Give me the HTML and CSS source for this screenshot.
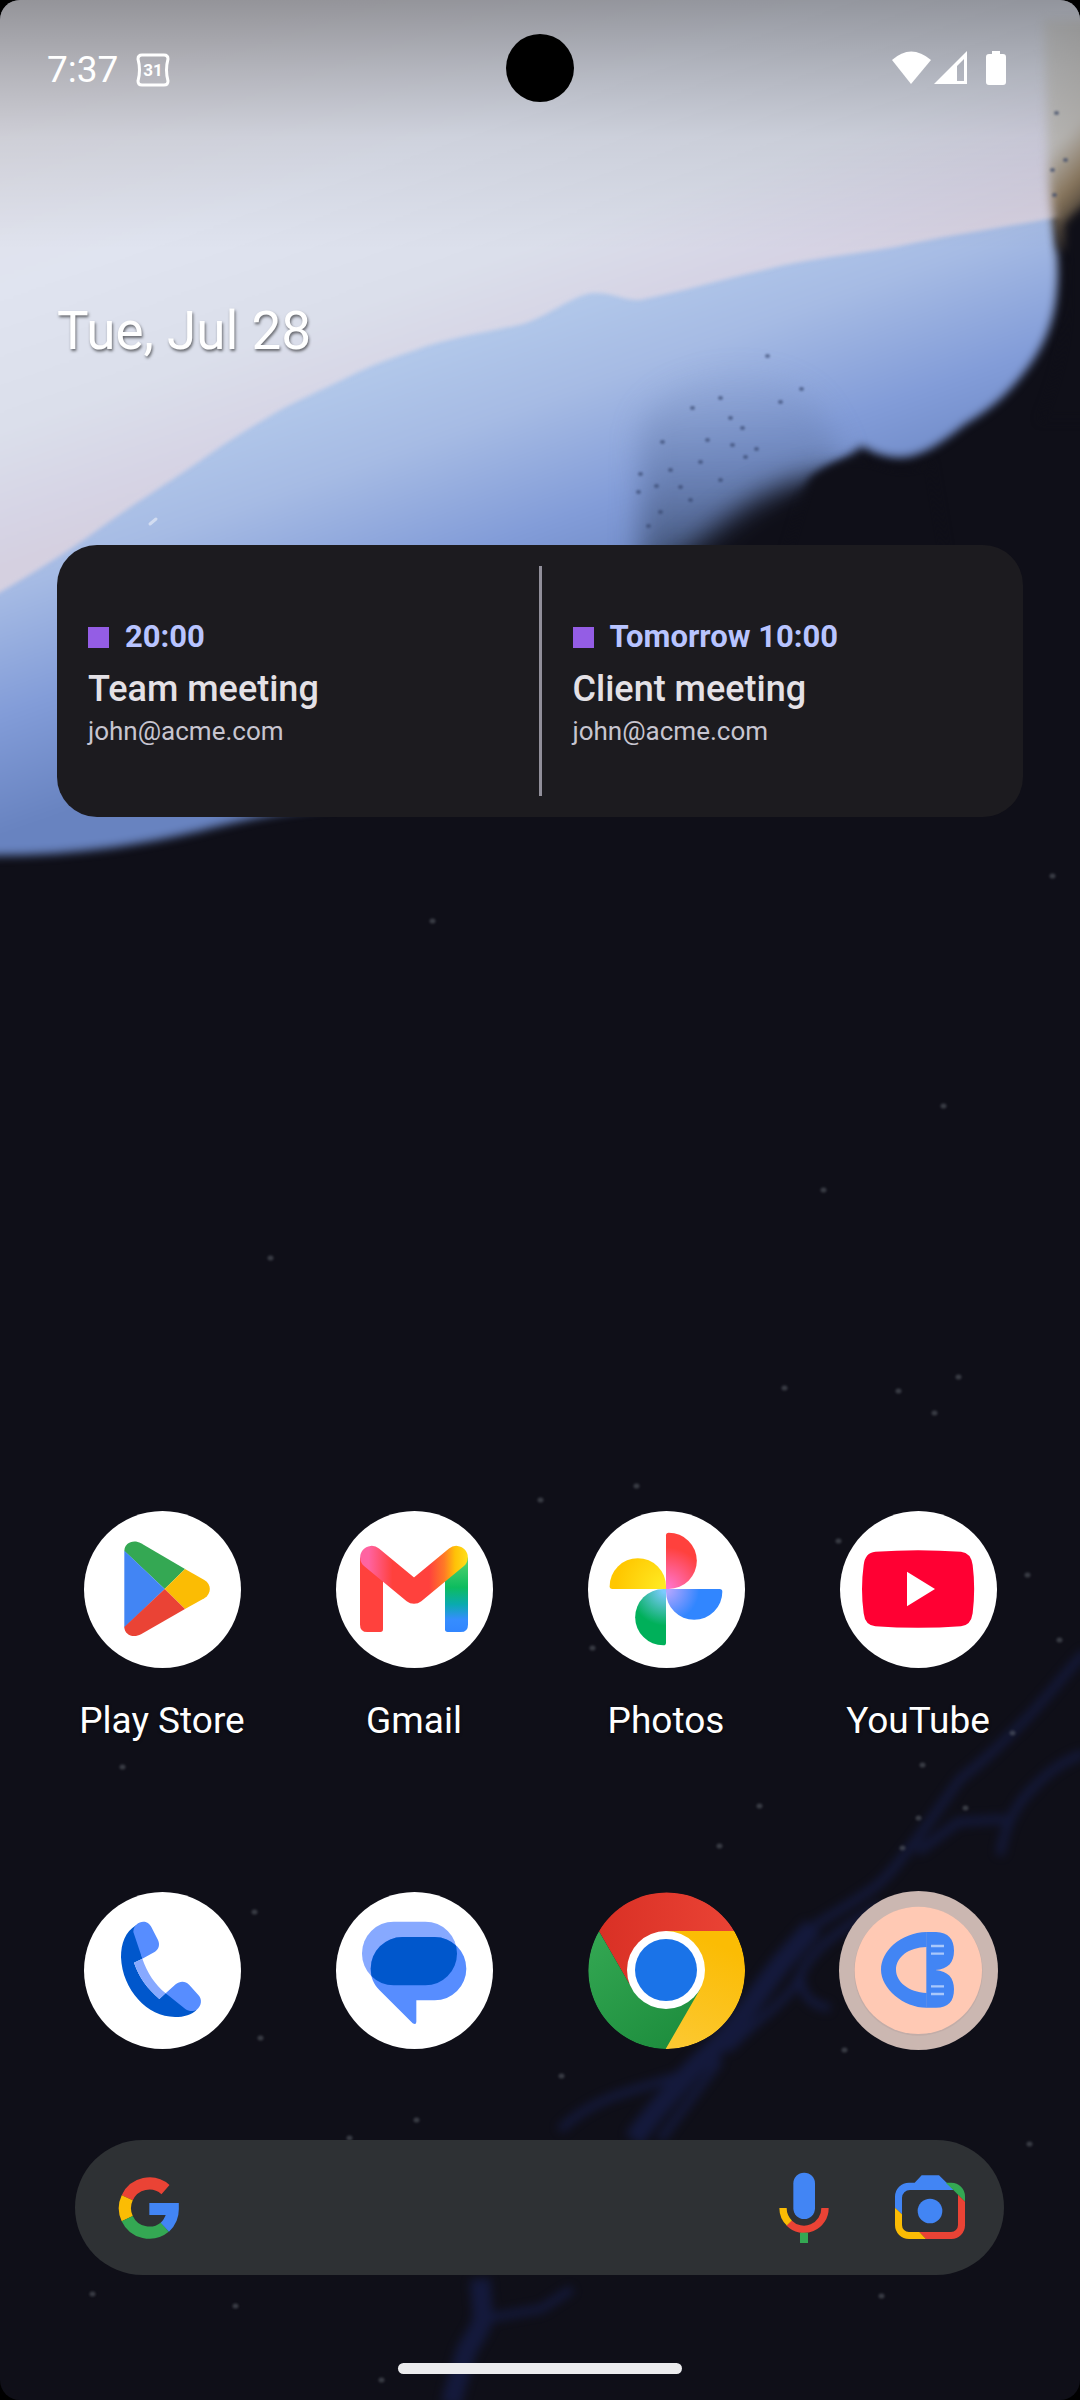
FILE: index.html
```html
<!DOCTYPE html>
<html lang="en">
<head>
    <meta charset="UTF-8">
    <meta name="viewport" content="width=device-width, initial-scale=1.0">
    <title>Home screen</title>
    <link rel="stylesheet" href="styles.css">
</head>
<body>
    <div class="screen">
        <!-- wallpaper -->
        <svg class="wallpaper" viewBox="0 0 1080 2400" preserveAspectRatio="xMidYMin slice" aria-hidden="true">
            <defs>
                <linearGradient id="blue" gradientUnits="userSpaceOnUse" x1="155" y1="442" x2="261" y2="743">
                    <stop offset="0" stop-color="#b2c8ea"/>
                    <stop offset="0.28" stop-color="#a6bbe4"/>
                    <stop offset="0.65" stop-color="#829cd8"/>
                    <stop offset="1" stop-color="#6883c0"/>
                </linearGradient>
                <linearGradient id="lilac" gradientUnits="userSpaceOnUse" x1="33" y1="94" x2="178" y2="508">
                    <stop offset="0" stop-color="#e0e0e8"/>
                    <stop offset="0.4" stop-color="#e0e4f0"/>
                    <stop offset="0.7" stop-color="#dbdfeb"/>
                    <stop offset="0.9" stop-color="#d6d4e5"/>
                    <stop offset="1" stop-color="#d5d0e0"/>
                </linearGradient>
                <linearGradient id="brown" x1="0.2" y1="0" x2="0.5" y2="1">
                    <stop offset="0" stop-color="#d6d7d9"/>
                    <stop offset="0.5" stop-color="#c2c0bd"/>
                    <stop offset="0.72" stop-color="#8d7a60"/>
                    <stop offset="1" stop-color="#17161a"/>
                </linearGradient>
                <linearGradient id="shade" x1="0" y1="0" x2="0" y2="1">
                    <stop offset="0" stop-color="#000" stop-opacity="0.34"/>
                    <stop offset="0.28" stop-color="#000" stop-opacity="0.2"/>
                    <stop offset="0.55" stop-color="#000" stop-opacity="0.08"/>
                    <stop offset="1" stop-color="#000" stop-opacity="0"/>
                </linearGradient>
                <linearGradient id="smoke" x1="0" y1="0" x2="0" y2="1">
                    <stop offset="0" stop-color="#6f86b4" stop-opacity="0.1"/>
                    <stop offset="0.5" stop-color="#566b97" stop-opacity="0.55"/>
                    <stop offset="1" stop-color="#2c3a55" stop-opacity="0.9"/>
                </linearGradient>
                <filter id="soft1" filterUnits="userSpaceOnUse" x="-60" y="-60" width="1200" height="2520"><feGaussianBlur stdDeviation="1"/></filter>
                <filter id="soft2" filterUnits="userSpaceOnUse" x="-60" y="-60" width="1200" height="2520"><feGaussianBlur stdDeviation="2"/></filter>
                <filter id="soft5" filterUnits="userSpaceOnUse" x="-60" y="-60" width="1200" height="2520"><feGaussianBlur stdDeviation="5"/></filter>
                <filter id="soft14" filterUnits="userSpaceOnUse" x="-60" y="-60" width="1200" height="1200"><feGaussianBlur stdDeviation="14"/></filter>
            </defs>
            <rect width="1080" height="2400" fill="#0f0f18"/>
            <path filter="url(#soft5)" fill="url(#blue)" d="M-40 200H1054C1055 240 1060 265 1057 290C1055 320 1044 350 1019 379C1000 402 985 412 964 425C945 440 930 451 912 456C895 460 878 456 862 446L800 490L700 600H626V700L420 800C300 806 250 818 200 831C138 845 70 858 -40 855Z"/>
            <path filter="url(#soft14)" fill="url(#smoke)" d="M640 590V430C656 370 780 350 820 410L840 450V590Z"/>
            <path filter="url(#soft14)" fill="#0f0f18" d="M640 640V584C690 556 720 520 756 500C790 480 826 470 858 482L900 500V640Z"/>
            <path filter="url(#soft5)" fill="#0f0f18" d="M810 478C835 456 860 456 885 466C900 471 915 470 930 462L960 640H760Z"/>
            <path filter="url(#soft2)" fill="url(#lilac)" d="M-20 -20H1100V215L1054 218C1000 228 950 235 895 247C850 255 810 258 764 270C720 280 680 292 640 300C625 301 612 292 592 293C570 297 550 315 523 324C485 333 450 337 413 351C385 360 365 368 344 379C320 391 297 400 275 413C250 428 230 440 207 456C170 482 135 503 103 526C65 554 30 575 -20 604Z"/>
            <path filter="url(#soft5)" fill="url(#brown)" d="M1044 20H1110V250H1058C1054 220 1050 200 1048 170Z"/>
            <path filter="url(#soft5)" fill="#0f0f18" d="M1064 224C1074 215 1080 205 1110 190V420H1040C1070 350 1070 300 1064 224Z"/>
            <path filter="url(#soft1)" class="grain" d="M640 474h1M707 440h1M732 445h1M680 487h1M745 457h1M756 449h1M801 389h1M767 356h1M660 512h1M638 492h1M670 470h1M690 500h1M720 480h1M648 526h1M692 408h1M720 398h1M742 428h1M780 402h1M662 442h1M700 462h1M656 486h1M730 418h1M1056 113h1M1052 170h1M1054 195h1M1065 160h1"/>
            <rect width="1080" height="250" fill="url(#shade)"/>
            <path class="streak" d="M150 524l6-5"/>
            <g filter="url(#soft5)" class="veins">
                <path d="M1085 1652C1055 1685 1045 1700 1023 1722C1000 1745 985 1760 960 1779L916 1840C900 1860 890 1875 876 1886C850 1905 830 1915 813 1927"/>
                <path class="thick" d="M813 1927L782 1962C760 1990 745 2015 728 2034C715 2050 700 2060 688 2074C670 2095 650 2115 634 2140"/>
                <path d="M1085 1753C1060 1762 1045 1775 1032 1789C1015 1805 1005 1825 1000 1855M1005 1819L958 1822L918 1852M880 1905C840 1930 810 1950 800 1976C790 2000 755 2020 728 2050M800 1976C802 1995 810 2005 830 2008"/>
                <path d="M690 2070C650 2090 600 2090 560 2130M720 2060L660 2140"/>
                <path class="thick" d="M480 2279L483 2319C478 2335 468 2345 465 2355C460 2375 455 2385 451 2405"/>
                <path d="M483 2319L541 2309L572 2289"/>
            </g>
            <path filter="url(#soft1)" class="stars" d="M432 921h1M270 1258h1M943 1106h1M958 1377h1M898 1391h1M934 1413h1M784 1388h1M636 1486h1M759 1806h1M719 1846h1M922 1765h1M918 1818h1M902 1848h1M965 1808h1M1012 1733h1M1059 1640h1M1027 1575h1M838 1541h1M592 1648h1M122 1767h1M260 2038h1M254 1912h1M561 2076h1M416 2120h1M349 2138h1M381 2380h1M235 2306h1M844 2050h1M1029 2144h1M881 2296h1M540 1500h1M823 1190h1M1052 876h1M92 2294h1"/>
        </svg>

        <header class="status">
            <div class="status-left">
                <time class="clock">7:37</time>
                <svg width="34" height="34" viewBox="0 0 34 34" role="img" aria-label="Calendar event">
                    <path d="M6 2H28Q32 2 32 6Q29 17 32 28Q32 32 28 32H6Q2 32 2 28Q5 17 2 6Q2 2 6 2Z" fill="none" stroke="#fff" stroke-width="3"/>
                    <text class="day" x="17" y="23" text-anchor="middle">31</text>
                </svg>
            </div>
            <div class="camera"></div>
            <div class="status-right">
                <svg width="118" height="36" viewBox="890 50 118 36" fill="#fff" role="img" aria-label="Wi-Fi, signal, battery">
                    <path d="M892 60Q911 43 931 60L911 84Z"/>
                    <path fill-rule="evenodd" d="M934 84L967 51V84ZM957 66V81H964V59Z"/>
                    <path d="M992 51H1000V54H1003Q1006 54 1006 57V82Q1006 85 1003 85H989Q986 85 986 82V57Q986 54 989 54H992Z"/>
                </svg>
            </div>
        </header>

        <main>
            <h1 class="date">Tue, Jul 28</h1>

            <section class="agenda">
                <article class="event">
                    <p class="event-time">20:00</p>
                    <h2>Team meeting</h2>
                    <p class="event-mail">john@acme.com</p>
                </article>
                <div class="divider"></div>
                <article class="event">
                    <p class="event-time">Tomorrow 10:00</p>
                    <h2>Client meeting</h2>
                    <p class="event-mail">john@acme.com</p>
                </article>
            </section>
        </main>

        <nav class="apps">
            <a class="app" href="#">
                <svg class="icon" viewBox="69 63 471 471" aria-hidden="true">
                    <path fill="#34a853" d="M190 183C190 160 216 147 240 160L372 237L311 297Z"/>
                    <path fill="#4285f4" d="M190 182L311 297L190 413Z"/>
                    <path fill="#fbbc04" d="M372 237L430 270C452 283 452 311 430 325L372 357L311 297Z"/>
                    <path fill="#ea4335" d="M190 411L311 297L372 357L240 433C216 446 190 434 190 411Z"/>
                </svg>
                <span>Play Store</span>
            </a>
            <a class="app" href="#">
                <svg class="icon" viewBox="825 63 471 471" aria-hidden="true">
                    <defs>
                        <linearGradient id="gm-top" gradientUnits="userSpaceOnUse" x1="897" y1="0" x2="1221" y2="0">
                            <stop offset="0.08" stop-color="#ff63a1"/>
                            <stop offset="0.3" stop-color="#ff413d"/>
                            <stop offset="0.64" stop-color="#ff413d"/>
                            <stop offset="0.78" stop-color="#ff7a26"/>
                            <stop offset="0.88" stop-color="#ffc107"/>
                            <stop offset="1" stop-color="#ffe01a"/>
                        </linearGradient>
                        <linearGradient id="gm-leg" gradientUnits="userSpaceOnUse" x1="0" y1="220" x2="0" y2="426">
                            <stop offset="0" stop-color="#4bd06c"/>
                            <stop offset="0.35" stop-color="#0dbc5f"/>
                            <stop offset="0.6" stop-color="#0aaab0"/>
                            <stop offset="0.82" stop-color="#368dff"/>
                            <stop offset="1" stop-color="#3186ff"/>
                        </linearGradient>
                    </defs>
                    <path fill="#ff413d" d="M897 202V404Q897 426 919 426H958Q966 426 966 418V240Z"/>
                    <path fill="url(#gm-leg)" d="M1221 202V404Q1221 426 1199 426H1160Q1152 426 1152 418V240Z"/>
                    <path fill="none" stroke="url(#gm-top)" stroke-width="69" stroke-linecap="round" stroke-linejoin="round" d="M932 202L1059 307L1186 202"/>
                </svg>
                <span>Gmail</span>
            </a>
            <a class="app" href="#">
                <svg class="icon" viewBox="81 63 471 471" aria-hidden="true">
                    <defs>
                        <radialGradient id="ph-red" gradientUnits="userSpaceOnUse" cx="315" cy="297" r="125">
                            <stop offset="0" stop-color="#ff78d6"/><stop offset="1" stop-color="#ff413d"/>
                        </radialGradient>
                        <radialGradient id="ph-blue" gradientUnits="userSpaceOnUse" cx="315" cy="297" r="100">
                            <stop offset="0.1" stop-color="#b0a5ff"/><stop offset="1" stop-color="#3186ff"/>
                        </radialGradient>
                        <radialGradient id="ph-green" gradientUnits="userSpaceOnUse" cx="315" cy="297" r="110">
                            <stop offset="0.1" stop-color="#7ccaff"/><stop offset="1" stop-color="#00b05a"/>
                        </radialGradient>
                        <radialGradient id="ph-yellow" gradientUnits="userSpaceOnUse" cx="315" cy="297" r="150">
                            <stop offset="0.1" stop-color="#ffe921"/><stop offset="1" stop-color="#ffc700"/>
                        </radialGradient>
                    </defs>
                    <path fill="url(#ph-red)" d="M315 297V136Q315 128 323 128A84 84 0 0 1 323 297Z"/>
                    <path fill="url(#ph-blue)" d="M315 297H476Q484 297 484 305A84 84 0 0 1 315 305Z"/>
                    <path fill="url(#ph-green)" d="M315 297V458Q315 466 307 466A84 84 0 0 1 307 297Z"/>
                    <path fill="url(#ph-yellow)" d="M315 297H154Q146 297 146 289A84 84 0 0 1 315 289Z"/>
                </svg>
                <span>Photos</span>
            </a>
            <a class="app" href="#">
                <svg class="icon" viewBox="837 63 471 471" aria-hidden="true">
                    <path fill="#ff0033" d="M943 185Q1071 176 1200 185Q1230 188 1235 225Q1244 297 1235 370Q1230 406 1200 409Q1071 418 943 409Q912 406 908 370Q898 297 908 225Q912 188 943 185Z"/>
                    <path fill="#fff" d="M1038 245L1122 297L1038 349Z"/>
                </svg>
                <span>YouTube</span>
            </a>
        </nav>

        <nav class="dock">
            <a class="app" href="#" aria-label="Phone">
                <svg class="icon" viewBox="72 66 471 471" aria-hidden="true">
                    <path fill="#0057cc" d="M228 166C196 186 183 220 183 262C187 360 262 441 345 441C372 441 396 434 410 419L317 369L298 387C262 355 238 325 222 278L247 266Z"/>
                    <path fill="#87a9ff" d="M222 278L247 266C262 310 285 343 317 370L298 387C262 355 238 325 222 278Z"/>
                    <path fill="#578dff" d="M220 186C220 167 236 155 250 155C263 155 270 163 274 171L294 210C300 224 297 236 285 245L247 266Z"/>
                    <path fill="#578dff" d="M317 370L347 343C360 332 376 332 388 345L415 375C428 389 424 409 410 419C400 425 388 425 376 417Z"/>
                </svg>
            </a>
            <a class="app" href="#" aria-label="Messages">
                <svg class="icon" viewBox="828 66 471 471" aria-hidden="true">
                    <defs>
                        <clipPath id="msg-back"><rect x="906" y="155" width="285" height="191" rx="95"/></clipPath>
                    </defs>
                    <rect x="906" y="155" width="285" height="191" rx="95" fill="#87a9ff"/>
                    <path fill="#578dff" d="M1027 201H1124A95 95 0 0 1 1124 391H1069V455Q1069 466 1058 460L958 360C941 342 932 322 932 296A95 95 0 0 1 1027 201Z"/>
                    <rect x="932" y="201" width="287" height="190" rx="95" fill="#0057cc" clip-path="url(#msg-back)"/>
                </svg>
            </a>
            <a class="app" href="#" aria-label="Chrome">
                <svg class="icon chrome" viewBox="84 66 471 471" aria-hidden="true">
                    <defs>
                        <linearGradient id="cr-red"><stop offset="0" stop-color="#d93025"/><stop offset="1" stop-color="#ea4335"/></linearGradient>
                        <linearGradient id="cr-yellow" x1="0" y1="1" x2="0.3" y2="0"><stop offset="0" stop-color="#fcc934"/><stop offset="1" stop-color="#fbbc04"/></linearGradient>
                        <linearGradient id="cr-green" x1="0.7" y1="1" x2="0" y2="0"><stop offset="0" stop-color="#1e8e3e"/><stop offset="1" stop-color="#34a853"/></linearGradient>
                    </defs>
                    <path fill="url(#cr-red)" d="M117 184A235 235 0 0 1 523 184L318 300L216 356Z"/>
                    <path fill="url(#cr-yellow)" d="M523 183A235 235 0 0 1 317 537L300 400L318 183Z"/>
                    <path fill="url(#cr-green)" d="M317 537A235 235 0 0 1 117 184L217 357L318 300L419 360Z"/>
                    <circle cx="318" cy="300" r="117" fill="#fff"/>
                    <circle cx="318" cy="300" r="93" fill="#1a73e8"/>
                </svg>
            </a>
            <a class="app" href="#" aria-label="Suggested app">
                <svg class="icon suggested" viewBox="837 63 477 477" aria-hidden="true">
                    <circle cx="1075" cy="304" r="193" fill="#b9a49f" opacity="0.5"/>
                    <circle cx="1075" cy="301" r="191" fill="#ffc9b4"/>
                    <path fill="#4285f4" d="M1100 186C1020 188 963 245 963 299C963 355 1030 413 1100 413V369C1045 366 1008 335 1008 299C1008 262 1045 232 1100 231Z"/>
                    <path fill="#4285f4" d="M1099 186H1128C1165 187 1182 208 1182 242C1182 277 1165 297 1126 300C1165 303 1182 325 1182 357C1182 395 1165 413 1128 413H1099Z"/>
                    <path stroke="#a9c8fb" stroke-width="7" d="M1113 228H1152M1113 251H1152M1113 349H1152M1113 372H1152"/>
                </svg>
            </a>
        </nav>

        <form class="search">
            <svg width="62" height="62" viewBox="173 167 186 188" fill="none" stroke-width="37" aria-hidden="true">
                <path stroke="#ea4335" d="M316 205A74 74 0 0 0 200 230"/>
                <path stroke="#fbbc04" d="M200 230A74 74 0 0 0 200 293"/>
                <path stroke="#34a853" d="M200 293A74 74 0 0 0 314 319"/>
                <path stroke="#4285f4" d="M314 319A74 74 0 0 0 338 264H267"/>
            </svg>
            <input type="text" name="q" aria-label="Search">
            <button type="button" aria-label="Voice search">
                <svg width="50" height="72" viewBox="297 156 150 216" aria-hidden="true">
                    <rect x="340" y="158" width="65" height="139" rx="32" fill="#4285f4"/>
                    <path fill="none" stroke="#ea4335" stroke-width="22" d="M327 309A63 63 0 0 0 435 264"/>
                    <path fill="none" stroke="#fbbc04" stroke-width="22" d="M309 264A63 63 0 0 0 328 309"/>
                    <path fill="#34a853" d="M360 338H384V369H360Z"/>
                </svg>
            </button>
            <button type="button" aria-label="Search with camera">
                <svg width="70" height="72" viewBox="645 156 210 216" aria-hidden="true">
                    <path fill="#4285f4" d="M645 263V230A42 42 0 0 1 687 188H704L725 166H777L822 210H690A24 24 0 0 0 666 234V283Z"/>
                    <path fill="#34a853" d="M797 188H814A41 41 0 0 1 855 229V245L820 210Z"/>
                    <path fill="#ea4335" d="M855 245V316A41 41 0 0 1 814 357H738L718 336H813A21 21 0 0 0 834 315V224Z"/>
                    <path fill="#fbbc04" d="M645 263L666 283V315A21 21 0 0 0 687 336H718L738 357H687A42 42 0 0 1 645 315Z"/>
                    <circle cx="750" cy="273" r="37" fill="#4285f4"/>
                </svg>
            </button>
        </form>

        <div class="handle"></div>
    </div>
</body>
</html>
```
FILE: styles.css
```css
* {
    box-sizing: border-box;
}
body {
    margin: 0;
    background-color: #000;
    color: #fff;
    font-family: Roboto, "Noto Sans", sans-serif;
}
.screen {
    position: relative;
    display: flex;
    flex-direction: column;
    min-height: 100vh;
    padding-bottom: 26px;
    border-radius: 20px;
    overflow: hidden;
    isolation: isolate;
}
.wallpaper {
    position: absolute;
    inset: 0;
    width: 100%;
    height: 100%;
    z-index: -1;
}
.wallpaper filter {
    color-interpolation-filters: sRGB;
}
.wallpaper feGaussianBlur {
    color-interpolation-filters: sRGB;
}
.grain {
    fill: none;
    stroke: #34436a;
    stroke-width: 4;
    stroke-linecap: round;
    opacity: 0.6;
}
.streak {
    fill: none;
    stroke: #e4eaf6;
    stroke-width: 3;
    stroke-linecap: round;
    opacity: 0.7;
}
.veins {
    fill: none;
    stroke: #182154;
    stroke-width: 8;
    opacity: 0.6;
}
.veins .thick {
    stroke-width: 20;
}
.stars {
    fill: none;
    stroke: #6a7078;
    stroke-width: 5;
    stroke-linecap: round;
    opacity: 0.45;
}

/* status bar */
.status {
    display: grid;
    grid-template-columns: 1fr 68px 1fr;
    align-items: center;
    height: 136px;
}
.status-left {
    display: flex;
    align-items: center;
    gap: 18px;
    padding: 4px 0 0 47px;
}
.status-right {
    display: flex;
    justify-content: flex-end;
    padding-right: 72px;
}
.clock {
    font-size: 37px;
    line-height: 44px;
}
.day {
    fill: #fff;
    font-size: 17px;
    font-weight: 700;
}
.camera {
    width: 68px;
    height: 68px;
    border-radius: 50%;
    background-color: #000;
}

/* date and agenda */
main {
    padding: 0 57px;
}
.date {
    margin: 163px 0 182px;
    font-size: 53px;
    font-weight: 400;
    line-height: 64px;
    text-shadow: 1px 2px 3px rgba(0, 0, 0, 0.55);
}
.agenda {
    display: grid;
    grid-template-columns: 1fr 3px 1fr;
    padding: 21px 0;
    background-color: #1c1b1f;
    border-radius: 40px;
}
.divider {
    background-color: #918f9a;
}
.event {
    display: flex;
    flex-direction: column;
    justify-content: center;
    height: 230px;
    padding: 0 31px 4px;
}
.event p,
.event h2 {
    margin: 0;
}
.event-time {
    display: flex;
    align-items: center;
    gap: 16px;
    color: #b8c4ff;
    font-size: 31px;
    font-weight: 700;
    line-height: 52px;
}
.event-time::before {
    content: "";
    width: 21px;
    height: 21px;
    background-color: #945de5;
}
.event h2 {
    color: #e4e1e6;
    font-size: 36px;
    font-weight: 500;
    line-height: 52px;
}
.event-mail {
    color: #c7c5d0;
    font-size: 26px;
    line-height: 32px;
}

/* app icons */
.apps,
.dock {
    display: grid;
    grid-template-columns: repeat(4, 1fr);
    align-items: center;
    padding: 0 36px;
}
.apps {
    margin-top: auto;
    margin-bottom: 148px;
}
.dock {
    margin-bottom: 90px;
}
.app {
    display: flex;
    flex-direction: column;
    align-items: center;
    gap: 31px;
    color: #fff;
    font-size: 37px;
    line-height: 44px;
    text-decoration: none;
    text-shadow: 0 1px 3px rgba(0, 0, 0, 0.6);
}
.icon {
    width: 157px;
    height: 157px;
    border-radius: 50%;
    background-color: #fff;
}
.chrome {
    background-color: transparent;
}
.suggested {
    width: 159px;
    height: 159px;
    background-color: #cbb7b1;
}

/* search bar */
.search {
    display: flex;
    align-items: center;
    height: 135px;
    margin: 0 76px 88px 75px;
    padding: 0 39px 0 43px;
    background-color: #2e3134;
    border-radius: 68px;
}
.search input {
    flex: 1;
    min-width: 0;
    height: 72px;
    border: none;
    outline: none;
    background: none;
    color: #fff;
    font: inherit;
    font-size: 37px;
}
.search button {
    display: flex;
    padding: 0;
    border: none;
    background: none;
    cursor: pointer;
}
.search button + button {
    margin-left: 66px;
}
.handle {
    width: 284px;
    height: 11px;
    margin: 0 auto;
    border-radius: 6px;
    background-color: #ececee;
}
```
